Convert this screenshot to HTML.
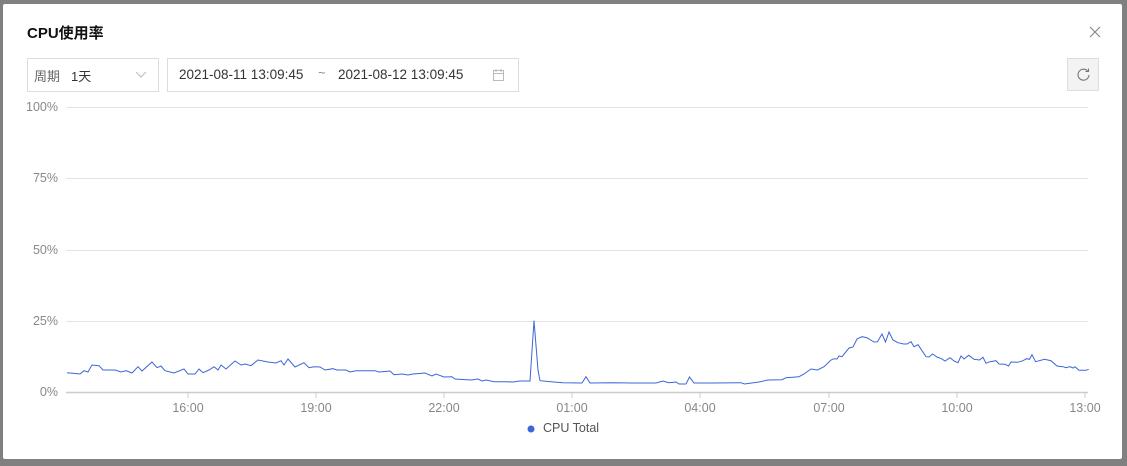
<!DOCTYPE html>
<html><head><meta charset="utf-8"><style>
body{margin:0;width:1127px;height:466px;background:#808080;position:relative;overflow:hidden;font-family:"Liberation Sans","Noto Sans CJK SC",sans-serif}
.m{position:absolute;left:3px;top:4px;width:1119px;height:455px;background:#fff;border-radius:2px}
.t{position:absolute;left:27px;top:22px;font-size:15px;font-weight:bold;color:#111}
.box{position:absolute;border:1px solid #ddd;font-size:13px;color:#333;box-sizing:border-box}
.yl{position:absolute;width:52px;text-align:right;font-size:12.5px;color:#888;left:6px}
.xl{position:absolute;font-size:12.5px;color:#888;width:60px;text-align:center;top:401px}
</style></head><body>
<div class="m"></div>
<div class="t">CPU使用率</div>
<svg style="position:absolute;left:1089px;top:26px" width="12" height="12"><path d="M1 1L11 11M11 1L1 11" stroke="#888" stroke-width="1.2"/></svg>
<div class="box" style="left:27px;top:58px;width:132px;height:34px"><span style="position:absolute;left:6px;top:7px;color:#666">周期</span><span style="position:absolute;left:43px;top:7px">1天</span>
<svg style="position:absolute;left:107px;top:12px" width="12" height="8"><path d="M1 1L6 6L11 1" fill="none" stroke="#bbb"/></svg></div>
<div class="box" style="left:167px;top:58px;width:352px;height:34px"><span style="position:absolute;left:11px;top:8px;font-size:13.5px">2021-08-11 13:09:45</span><span style="position:absolute;left:150px;top:6px;color:#888">~</span><span style="position:absolute;left:170px;top:8px;font-size:13.5px">2021-08-12 13:09:45</span>
<svg style="position:absolute;left:325px;top:10px" width="11" height="12"><rect x="0.5" y="1.5" width="10" height="10" fill="none" stroke="#bbb"/><path d="M0.5 4.5H10.5M3 0V3M8 0V3" stroke="#bbb"/></svg></div>
<div class="box" style="left:1067px;top:58px;width:32px;height:33px;background:#f3f3f3;border-color:#ddd">
<svg style="position:absolute;left:8px;top:8px" width="15" height="15"><path d="M12 4.5A5.5 5.5 0 1 0 13 8" fill="none" stroke="#777" stroke-width="1.1"/><path d="M9.5 4.5H12.5V1.5" fill="none" stroke="#777" stroke-width="1.1"/></svg></div>
<div class="yl" style="top:100px">100%</div><div class="yl" style="top:171px">75%</div><div class="yl" style="top:243px">50%</div><div class="yl" style="top:314px">25%</div><div class="yl" style="top:385px">0%</div>
<svg style="position:absolute;left:0;top:0" width="1127" height="466">
<g stroke="#e3e3e3" stroke-width="1"><path d="M66 107.5H1088M66 178.5H1088M66 250.5H1088M66 321.5H1088"/></g>
<path d="M66 392.5H1088" stroke="#ccc" stroke-width="1.5"/>
<g stroke="#ccc"><path d="M188 393V398M316 393V398M444 393V398M572 393V398M700 393V398M829 393V398M957 393V398M1085 393V398"/></g>
<polyline fill="none" stroke="#3d66d6" stroke-width="1" points="67,372.7 80,374 84,370.7 88,372 92,365 99,365.7 103,370 115,370 121,372 126,370.7 132,373 138,366.7 142,371 152,362 157,367.7 161,366 165,370.7 174,373 184,369 188,374 195,374 199,369 203,372.7 209,370 214,366.7 218,370 221,365 226,369 235,361 241,365 245,364 251,365.7 258,360 268,362 276,363 281,360.7 284,365 288,359 295,367 304,362.7 309,367.7 314,366.7 320,367 325,370 333,368.7 337,370 346,370 350,372 356,370.7 375,370.7 379,372 390,371 394,374.7 402,374 408,375 413,374 425,373 432,376 436,374 444,377 452,376.7 455,379 471,380 478,379 482,381 486,380 494,381.7 505,381.7 513,382 520,381 530,381 534,320.7 538,370 540,380.7 551,381.7 563,382.7 582,383 586,376.7 590,383 614,382.7 632,383 656,383 663,381 668.5,382.7 676,382 679,384 686,384 689.5,377 694,383 712,383 741,382.7 744.5,384 759,382 768,380 782,379.7 786,377.7 799,376.7 804,374 811,369 817.5,370 824,366.7 831,360 834,358.7 837,359 839,356 842,356.7 849,348 853,347 857,339 862,336.7 867,337.7 874,342 877.5,341.7 882,334 885.5,342 889,332 893,340 898,342.7 903.6,344 907,344 911,341.7 914,346.7 918,344.7 926,356.7 929,357 932.5,354 937,357 941.5,358.7 945,361 950,357.7 954,361 958,362.7 961,356 964,359 968.7,355.3 974,359.3 979.5,360 983,357.3 986,363.3 990,361.7 996,360.7 999,364 1005,364.3 1008.5,366 1011,362 1017.5,362.3 1023,360.7 1026.5,358.7 1029.5,359.3 1032,354.7 1035.6,361.7 1044.6,359.3 1051,360.7 1057,366 1063,366.7 1066,367.7 1070,366.7 1073,368 1075,366.7 1079,370.3 1086,370.3 1088.7,369.3"/>
<circle cx="531" cy="429" r="3.5" fill="#3d66d6"/>
</svg>
<div class="xl" style="left:158px">16:00</div><div class="xl" style="left:286px">19:00</div><div class="xl" style="left:414px">22:00</div><div class="xl" style="left:542px">01:00</div><div class="xl" style="left:670px">04:00</div><div class="xl" style="left:799px">07:00</div><div class="xl" style="left:927px">10:00</div><div class="xl" style="left:1055px">13:00</div>
<div style="position:absolute;left:543px;top:421px;font-size:12.5px;color:#555">CPU Total</div>
</body></html>
